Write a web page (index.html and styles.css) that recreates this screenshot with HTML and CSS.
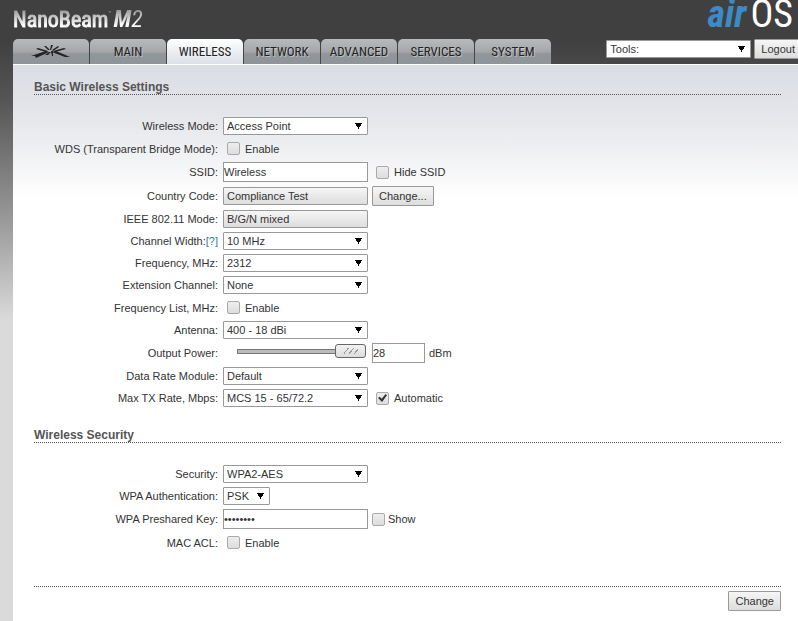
FILE: index.html
```
<!DOCTYPE html>
<html lang="en">
<head>
    <meta charset="UTF-8">
    <meta name="viewport" content="width=device-width, initial-scale=1.0">
    <title>NanoBeam M2 - Wireless</title>
    <link rel="stylesheet" href="styles.css">
</head>
<body>
    <header class="header">
        <div class="brand">
            <div class="product"><span>NanoBeam</span><sup>™</sup><em>M<i>2</i></em></div>
            <div class="airos"><em>air</em><span>OS</span></div>
        </div>
        <div class="bar">
            <nav class="tabs">
                <a href="#" class="tab" aria-label="Ubiquiti">
                    <svg width="40" height="14" viewBox="0 0 40 14">
                        <g fill="#222">
                            <path d="M0 11L15 6L18 7L5 13L4 11Z"/>
                            <path d="M5 4L7 3L17 6L15 7Z"/>
                            <path d="M13 1L15 1L19 5L17 5Z"/>
                            <path d="M20 0L22 0L20 5L19 5Z"/>
                            <path d="M27 1L28 2L22 6L21 5Z"/>
                            <path d="M33 3L35 4L24 7L22 6Z"/>
                            <path d="M39 12L34 12L21 7L25 6Z"/>
                            <path d="M18 7L20 7L17 10L14 10Z"/>
                            <path d="M20 6L22 6L22 11L21 11Z"/>
                        </g>
                    </svg>
                </a>
                <a href="#" class="tab">MAIN</a>
                <a href="#" class="tab active">WIRELESS</a>
                <a href="#" class="tab">NETWORK</a>
                <a href="#" class="tab">ADVANCED</a>
                <a href="#" class="tab">SERVICES</a>
                <a href="#" class="tab">SYSTEM</a>
            </nav>
            <div class="tools">
                <select aria-label="Tools"><option>Tools:</option></select>
                <button type="button">Logout</button>
            </div>
        </div>
    </header>
    <form class="panel">
        <h2>Basic Wireless Settings</h2>
        <div class="rows">
            <div class="row">
                <label class="name" for="mode">Wireless Mode:</label>
                <select id="mode"><option>Access Point</option></select>
            </div>
            <div class="row check-row">
                <label class="name" for="wds">WDS (Transparent Bridge Mode):</label>
                <label class="check"><input type="checkbox" id="wds">Enable</label>
            </div>
            <div class="row tall">
                <label class="name" for="ssid">SSID:</label>
                <input type="text" id="ssid" value="Wireless">
                <label class="check"><input type="checkbox">Hide SSID</label>
            </div>
            <div class="row tall">
                <label class="name" for="country">Country Code:</label>
                <select id="country" disabled><option>Compliance Test</option></select>
                <button type="button">Change...</button>
            </div>
            <div class="row">
                <label class="name" for="ieee">IEEE 802.11 Mode:</label>
                <select id="ieee" disabled><option>B/G/N mixed</option></select>
            </div>
            <div class="row">
                <span class="name"><label for="width">Channel Width:</label><a href="#">[?]</a></span>
                <select id="width"><option>10 MHz</option></select>
            </div>
            <div class="row">
                <label class="name" for="freq">Frequency, MHz:</label>
                <select id="freq"><option>2312</option></select>
            </div>
            <div class="row">
                <label class="name" for="ext">Extension Channel:</label>
                <select id="ext"><option>None</option></select>
            </div>
            <div class="row check-row">
                <label class="name" for="freqlist">Frequency List, MHz:</label>
                <label class="check"><input type="checkbox" id="freqlist">Enable</label>
            </div>
            <div class="row">
                <label class="name" for="antenna">Antenna:</label>
                <select id="antenna"><option>400 - 18 dBi</option></select>
            </div>
            <div class="row tall">
                <label class="name" for="power">Output Power:</label>
                <div class="slider"><input type="range" min="0" max="28" value="28" aria-label="Output Power"></div>
                <input type="text" id="power" class="short" value="28">
                <span>dBm</span>
            </div>
            <div class="row">
                <label class="name" for="module">Data Rate Module:</label>
                <select id="module"><option>Default</option></select>
            </div>
            <div class="row">
                <label class="name" for="rate">Max TX Rate, Mbps:</label>
                <select id="rate"><option>MCS 15 - 65/72.2</option></select>
                <label class="check"><input type="checkbox" checked>Automatic</label>
            </div>
        </div>
        <h2>Wireless Security</h2>
        <div class="rows">
            <div class="row">
                <label class="name" for="security">Security:</label>
                <select id="security"><option>WPA2-AES</option></select>
            </div>
            <div class="row">
                <label class="name" for="auth">WPA Authentication:</label>
                <select id="auth" class="auth"><option>PSK</option></select>
            </div>
            <div class="row tall">
                <label class="name" for="key">WPA Preshared Key:</label>
                <input type="password" id="key" value="password">
                <label class="check tight"><input type="checkbox">Show</label>
            </div>
            <div class="row check-row">
                <label class="name" for="acl">MAC ACL:</label>
                <label class="check"><input type="checkbox" id="acl">Enable</label>
            </div>
        </div>
        <div class="actions">
            <button type="submit">Change</button>
        </div>
    </form>
</body>
</html>
```
FILE: styles.css
```
*{
    box-sizing: border-box;
}
body{
    margin: 0;
    min-height: 100vh;
    display: flex;
    flex-direction: column;
    padding-left: 13px;
    font-family: "Liberation Sans", Arial, sans-serif;
    font-size: 11px;
    color: #333;
    background: #dadada linear-gradient(#404040 40px, #555 100px, #999 220px, #dadada 320px) no-repeat;
}
.header{
    height: 64px;
    margin-left: -13px;
    padding-left: 13px;
    display: flex;
    flex-direction: column;
    justify-content: space-between;
    overflow: hidden;
    background: linear-gradient(#404040 40px, #484848);
}
.brand{
    height: 32px;
    display: flex;
    align-items: flex-end;
    justify-content: space-between;
    padding-right: 5px;
    font-family: "Roboto Condensed", Roboto, sans-serif;
}
.product{
    display: flex;
    align-items: baseline;
    font-size: 22px;
    line-height: 24px;
    color: transparent;
    background: linear-gradient(#999 3px, #fff 18px);
    -webkit-background-clip: text;
    background-clip: text;
}
.product span{
    -webkit-text-stroke: 1px transparent;
}
.product sup{
    align-self: flex-start;
    font-size: 6px;
    line-height: 12px;
}
.product em{
    margin-left: 2px;
    font-size: 24px;
    font-weight: bold;
}
.product i{
    font-weight: normal;
}
.airos{
    display: flex;
    gap: 4px;
    font-size: 38px;
    line-height: 36px;
    color: #fff;
}
.airos em{
    color: #3d8ac6;
    font-weight: bold;
}
.bar{
    display: flex;
    justify-content: space-between;
}
.tabs{
    display: flex;
    gap: 1px;
}
.tab{
    width: 76px;
    height: 25px;
    display: flex;
    align-items: center;
    justify-content: center;
    border-radius: 5px 5px 0 0;
    font-family: "Roboto Condensed", Roboto, sans-serif;
    font-size: 13px;
    color: #222;
    text-decoration: none;
    text-shadow: 1px 1px 0 rgba(255,255,255,0.4);
    background: linear-gradient(#b9babb, #a5a7aa 50%, #92969b 60%, #8f9499);
}
.tab.active{
    background: linear-gradient(#fff, #eceef2 50%, #dde0e6);
}
.tools{
    display: flex;
    align-items: flex-start;
    gap: 3px;
    margin-right: -4px;
}
.tools select{
    margin-top: 1px;
}
.panel{
    flex: 1;
    padding: 14px 17px 10px 21px;
    border-top: 1px solid #fff;
    background: #fff linear-gradient(#dadde4, #e6e7eb 55px, #fff 135px) no-repeat;
}
h2{
    height: 16px;
    margin: 0;
    font-size: 12px;
    line-height: 16px;
    color: #555;
    border-bottom: 1px dotted #555;
}
.rows{
    padding: 20px 0 18px;
}
.row{
    display: flex;
    align-items: center;
    gap: 4px;
    height: 22px;
}
.check-row{
    height: 23px;
}
.tall{
    height: 24px;
}
.name{
    width: 185px;
    padding-right: 1px;
    text-align: right;
}
.name a{
    color: #2a7f9f;
    text-decoration: none;
}
select, button, input{
    margin: 0;
    font: inherit;
    color: inherit;
}
select{
    appearance: none;
    width: 145px;
    height: 18px;
    padding: 0 3px;
    border: 1px solid #999;
    border-radius: 1px;
    color: #333;
    background: #fff conic-gradient(from -30deg at 50% 100%, #000 60deg, transparent 0) no-repeat right 5px center / 7px 6px;
}
select:disabled{
    opacity: 1;
    color: #333;
    background: linear-gradient(#f6f6f6, #ddd);
}
.auth{
    width: 47px;
}
input[type=text], input[type=password]{
    width: 145px;
    height: 20px;
    padding: 0;
    border: 1px solid #999;
    background: #fff;
}
input.short{
    width: 53px;
}
button{
    height: 20px;
    padding: 0 6px;
    border: 1px solid #999;
    border-radius: 1px;
    background: linear-gradient(#f6f6f6, #ddd);
}
.check{
    display: flex;
    align-items: center;
    gap: 5px;
    padding-left: 4px;
}
.check.tight{
    gap: 3px;
    padding-left: 0;
}
input[type=checkbox]{
    appearance: none;
    display: grid;
    place-items: center;
    width: 13px;
    height: 13px;
    border: 1px solid #aaa;
    border-radius: 2px;
    background: linear-gradient(#eee, #ddd);
}
input[type=checkbox]:checked::before{
    content: "";
    width: 9px;
    height: 8px;
    background: #333;
    clip-path: polygon(0 50%, 20% 35%, 40% 60%, 85% 0, 100% 15%, 45% 100%);
}
.slider{
    display: flex;
    width: 145px;
    padding: 0 2px 4px 14px;
}
input[type=range]{
    appearance: none;
    width: 100%;
    height: 16px;
    background: none;
}
input[type=range]::-webkit-slider-runnable-track{
    height: 5px;
    background: #bbb;
    box-shadow: inset 0 0 0 1px #777;
}
input[type=range]::-webkit-slider-thumb{
    appearance: none;
    width: 31px;
    height: 14px;
    margin-top: -5px;
    border: 1px solid #666;
    border-radius: 3px;
    background:
        repeating-linear-gradient(130deg, transparent 0 3px, #999 3px 4px) no-repeat center / 14px 6px,
        linear-gradient(#f2f2f2, #ddd);
}
.actions{
    display: flex;
    justify-content: flex-end;
    margin-top: 14px;
    padding-top: 4px;
    border-top: 1px dotted #555;
}
```
